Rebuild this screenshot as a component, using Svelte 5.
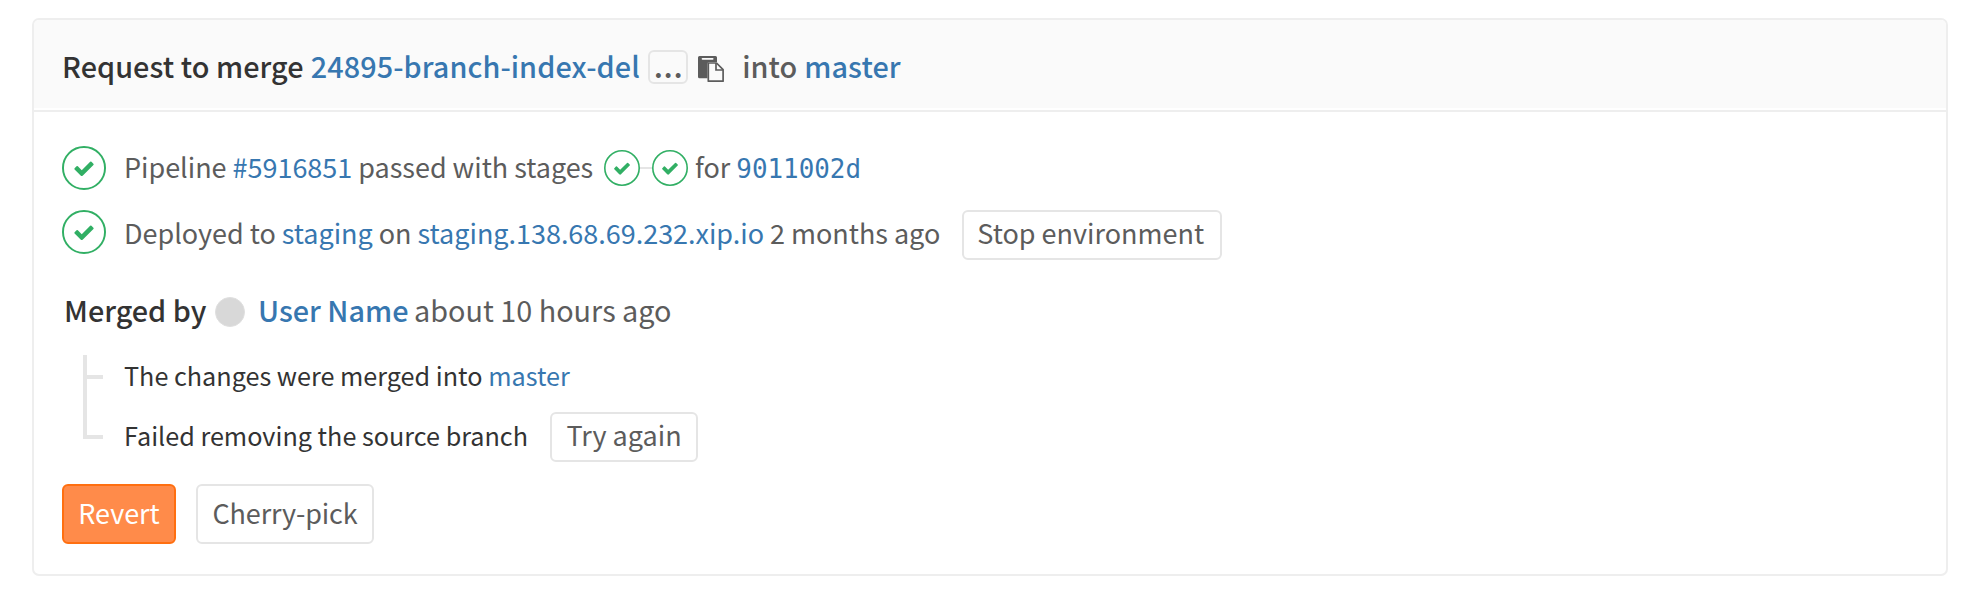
<script>
  const check =
    'M6.278 7.697L5.045 6.464a.296.296 0 0 0-.42-.002l-.613.614a.298.298 0 0 0 .002.42l1.91 1.909a.5.5 0 0 0 .703.005l.265-.265L9.997 6.04a.291.291 0 0 0-.009-.408l-.614-.614a.29.29 0 0 0-.408-.009L6.278 7.697z';
</script>

{#snippet status(size)}
  <svg class="status" width={size} height={size} viewBox="0 0 14 14" aria-hidden="true">
    <circle cx="7" cy="7" r="6.69" fill="#fff" stroke="#31af64" stroke-width=".62" />
    <path d={check} fill="#31af64" />
  </svg>
{/snippet}

<section class="card">
  <header>
    <span class="strong dark request">Request to merge</span>
    <a class="strong branch" href="#branch">24895-branch-index-del</a>
    <button class="expander">...</button>
    <svg class="paste" width="26" height="26" viewBox="0 0 26 26" aria-hidden="true">
      <path d="M1.500 0h16A1.500 1.500 0 0 1 19 1.500V6H11.200A1.700 1.700 0 0 0 9.500 7.700V22.300H1.500A1.500 1.500 0 0 1 0 20.800V1.500A1.500 1.500 0 0 1 1.500 0z" fill="#5c5c5c" />
      <path d="M4.500 2.800h10.200" stroke="#fafafa" stroke-width="1.700" stroke-linecap="round" />
      <path d="M10.300 7h8.200l6.600 6.700v11.500H10.300z" fill="#fafafa" stroke="#5c5c5c" stroke-width="1.700" stroke-linejoin="round" />
      <path d="M18 7v7h7" fill="none" stroke="#5c5c5c" stroke-width="1.700" />
    </svg>
    <span class="strong into">into</span>
    <a class="strong target" href="#master">master</a>
  </header>

  <div class="body">
    <div class="row pipeline">
      {@render status(44)}
      <p>Pipeline <a href="#pipeline">#5916851</a> passed with stages</p>
      <div class="stages">
        {@render status(36)}
        <i></i>
        {@render status(36)}
      </div>
      <p>for</p>
      <a class="sha" href="#commit">9011002d</a>
    </div>

    <div class="row deploy">
      {@render status(44)}
      <p>Deployed to <a href="#staging">staging</a> on <a href="#host">staging.138.68.69.232.xip.io</a> 2 months ago</p>
      <button class="btn small stop">Stop environment</button>
    </div>

    <div class="merged">
      <span class="strong dark">Merged by</span>
      <span class="avatar"></span>
      <a class="strong" href="#user">User Name</a>
      <span class="when">about 10 hours ago</span>
    </div>

    <ul>
      <li><span>The changes were merged into <a href="#master">master</a></span></li>
      <li><span>Failed removing the source branch</span><button class="btn small retry">Try again</button></li>
    </ul>

    <div class="actions">
      <button class="btn revert">Revert</button>
      <button class="btn pick">Cherry-pick</button>
    </div>
  </div>
</section>

<style>
  :global(body) {
    background: #fff;
  }
  .card {
    box-sizing: border-box;
    width: 1916px;
    height: 558px;
    margin: 18px 0 0 32px;
    border: 2px solid #eee;
    border-radius: 7px;
    background: #fff;
    font: 400 27px/40px 'Noto Sans CJK SC', 'Noto Sans', sans-serif;
    color: #5c5c5c;
    display: flow-root;
    white-space: nowrap;
  }
  a {
    color: #3777b0;
    text-decoration: none;
  }
  p {
    margin: 0;
    letter-spacing: -0.025px;
  }
  svg {
    display: block;
    flex: none;
  }
  button {
    box-sizing: border-box;
    margin: 0;
    font: inherit;
    color: inherit;
    background: #fff;
    border: 2px solid #e5e5e5;
    border-radius: 6px;
    padding: 0;
    text-align: center;
  }
  .strong {
    font-size: 28.8px;
    font-weight: 500;
  }
  .dark {
    color: #333;
  }
  header {
    display: flex;
    align-items: flex-start;
    height: 88px;
    padding: 0 28px;
    background: #fafafa;
    border-radius: 5px 5px 0 0;
    line-height: 91px;
  }
  .request {
    letter-spacing: 0.06px;
  }
  .branch {
    margin-left: 7px;
    letter-spacing: 0.08px;
  }
  .expander {
    width: 40px;
    height: 34px;
    margin: 30px 0 0 8.200px;
    padding-bottom: 4px;
    background: #fafafa;
    font-size: 31px;
    font-weight: 500;
    line-height: 22px;
    letter-spacing: 0.6px;
    text-indent: 1px;
  }
  .paste {
    margin: 35.700px 0 0 10px;
  }
  .into {
    margin-left: 18.300px;
  }
  .target {
    margin-left: 7px;
    letter-spacing: 0.1px;
  }
  .body {
    margin-top: 2px;
    padding: 34px 28px 0;
    border-top: 2px solid #eee;
  }
  .row {
    display: flex;
    align-items: flex-start;
  }
  .row > .status {
    margin-right: 18px;
  }
  .pipeline {
    height: 44px;
    line-height: 42.400px;
  }
  .stages {
    display: flex;
    align-items: center;
    margin: 4px 7.500px 0 10.300px;
  }
  .stages i {
    width: 12px;
    height: 2px;
    background: #e5e5e5;
  }
  .sha {
    margin-left: 6px;
    font-family: 'DejaVu Sans Mono', monospace;
    font-size: 25.900px;
    line-height: 47px;
  }
  .deploy {
    height: 50px;
    margin-top: 20px;
    line-height: 46.400px;
  }
  .small {
    height: 50px;
    font-size: 27px;
  }
  .stop {
    width: 260px;
    margin-left: 21.500px;
    padding-right: 2px;
  }
  .stop,
  .retry {
    padding-bottom: 4px;
    line-height: 40px;
  }
  .merged {
    display: flex;
    height: 40px;
    margin-top: 30px;
    padding-left: 2px;
    line-height: 40.800px;
  }
  .avatar {
    box-sizing: border-box;
    width: 30px;
    height: 30px;
    margin: 7px 13.300px 0 8.400px;
    border: 1px solid #dfdfdf;
    border-radius: 50%;
    background: #d8d8d8;
  }
  .when {
    margin-left: 5.500px;
    font-size: 28.8px;
  }
  ul {
    box-sizing: border-box;
    width: 800px;
    height: 84px;
    margin: 25px 0 0 21px;
    padding: 0;
    list-style: none;
    border-left: 4px solid #e5e5e5;
    font-size: 25.2px;
    color: #333;
  }
  li {
    display: flex;
    align-items: center;
    height: 44px;
  }
  li::before {
    content: '';
    width: 16px;
    height: 4px;
    margin-right: 21px;
    background: #e5e5e5;
  }
  li span {
    padding-bottom: 4px;
  }
  li + li {
    height: 60px;
    margin-top: 8px;
  }
  .retry {
    width: 148px;
    margin-left: 22px;
    color: #5c5c5c;
  }
  .actions {
    display: flex;
    gap: 20px;
    margin-top: 45px;
  }
  .actions .btn {
    height: 60px;
    padding: 0 0 1.500px;
  }
  .pick {
    width: 178px;
    letter-spacing: -0.15px;
  }
  .revert {
    width: 114px;
    background: #ff8b4a;
    border-color: #ff6f10;
    color: #fff;
  }
</style>
